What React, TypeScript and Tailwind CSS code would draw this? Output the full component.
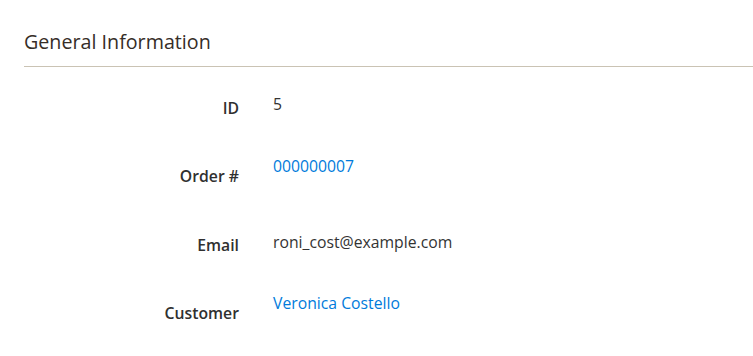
export default function App() {
  const rows = [
    { label: "ID", value: "5", link: false, lt: "mt-[30px]", vt: "mt-[26px]" },
    { label: "Order #", value: "000000007", link: true, lt: "mt-[30px]", vt: "mt-[20px]" },
    { label: "Email", value: "roni_cost@example.com", link: false, lt: "mt-[31px]", vt: "mt-[28px]" },
    { label: "Customer", value: "Veronica Costello", link: true, lt: "mt-[31px]", vt: "mt-[21px]" },
  ];
  return (
    <div className="w-[753px] h-[356px] bg-white overflow-hidden" style={{ fontFamily: '"Open Sans", sans-serif' }}>
      <div className="pl-6 pt-[28px]">
        <div className="border-b border-[#cac3b4] pb-[10px]">
          <span className="text-[19.7px] font-normal text-[#362d27] leading-[28px]">General Information</span>
        </div>
        <div>
          {rows.map((r) => (
            <div key={r.label} className="flex items-start h-[68px]">
              <div className={`w-[215px] text-right text-[15.75px] font-semibold text-[#303030] leading-[22px] ${r.lt}`}>{r.label}</div>
              <div className={`ml-[34px] text-[15.75px] leading-[22px] ${r.vt} ${r.link ? "text-[#007bdb]" : "text-[#333333]"}`}>{r.value}</div>
            </div>
          ))}
        </div>
      </div>
    </div>
  );
}
